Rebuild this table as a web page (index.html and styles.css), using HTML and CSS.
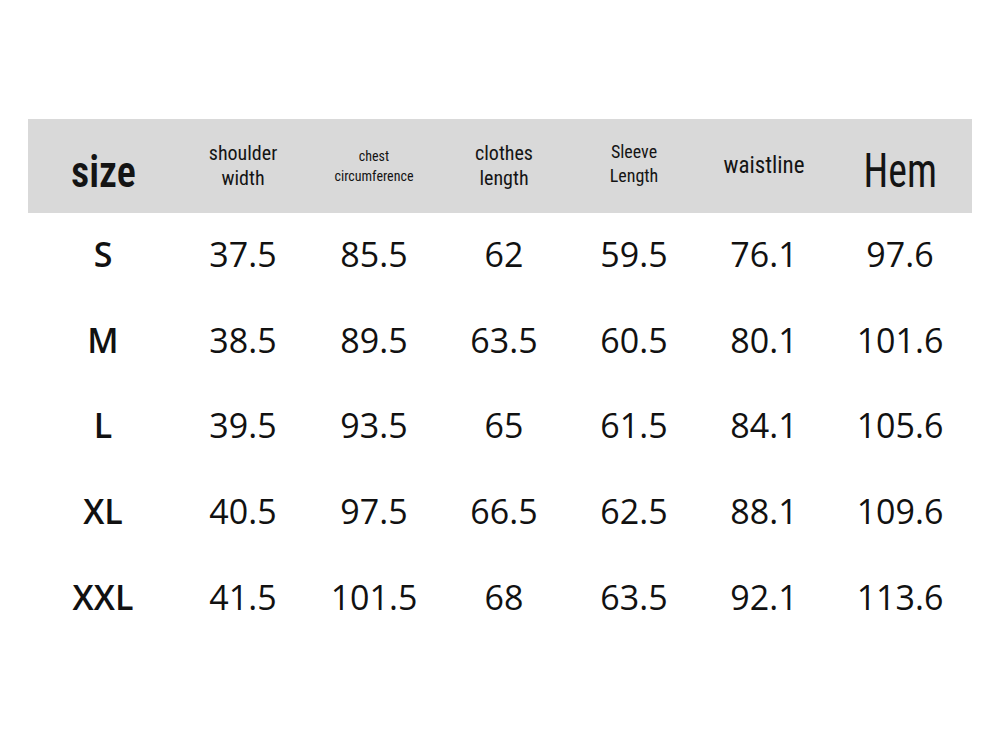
FILE: index.html
```html
<!DOCTYPE html>
<html>
<head>
<meta charset="utf-8">
<link rel="stylesheet" href="styles.css">
</head>
<body>
<div class="page">
  <div class="table">
    <div class="row head">
      <div class="cell h-size"><span class="narrow">size</span></div>
      <div class="cell h-two">shoulder<br>width</div>
      <div class="cell h-small">chest<br>circumference</div>
      <div class="cell h-two">clothes<br>length</div>
      <div class="cell h-sleeve">Sleeve<br>Length</div>
      <div class="cell h-waist">waistline</div>
      <div class="cell h-hem"><span class="narrow">Hem</span></div>
    </div>
    <div class="row">
      <div class="cell label">S</div><div class="cell">37.5</div><div class="cell">85.5</div><div class="cell">62</div><div class="cell">59.5</div><div class="cell">76.1</div><div class="cell">97.6</div>
    </div>
    <div class="row">
      <div class="cell label">M</div><div class="cell">38.5</div><div class="cell">89.5</div><div class="cell">63.5</div><div class="cell">60.5</div><div class="cell">80.1</div><div class="cell">101.6</div>
    </div>
    <div class="row">
      <div class="cell label">L</div><div class="cell">39.5</div><div class="cell">93.5</div><div class="cell">65</div><div class="cell">61.5</div><div class="cell">84.1</div><div class="cell">105.6</div>
    </div>
    <div class="row">
      <div class="cell label">XL</div><div class="cell">40.5</div><div class="cell">97.5</div><div class="cell">66.5</div><div class="cell">62.5</div><div class="cell">88.1</div><div class="cell">109.6</div>
    </div>
    <div class="row">
      <div class="cell label">XXL</div><div class="cell">41.5</div><div class="cell">101.5</div><div class="cell">68</div><div class="cell">63.5</div><div class="cell">92.1</div><div class="cell">113.6</div>
    </div>
  </div>
</div>
</body>
</html>
```

FILE: styles.css
```css
* { box-sizing: border-box; }
html, body {
  margin: 0;
  padding: 0;
  background: #ffffff;
}
.page {
  width: 1000px;
  height: 750px;
  padding: 119px 28px 0 28px;
  font-family: "Open Sans", "Noto Sans", sans-serif;
  color: #111111;
}
.table {
  width: 944px;
  display: flex;
  flex-direction: column;
}
.row {
  display: grid;
  grid-template-columns: 150px 130px 132px 128px 132px 128px 144px;
  height: 85.7px;
  align-items: center;
}
.cell {
  text-align: center;
  font-size: 34px;
  line-height: 1;
  padding-bottom: 4px;
}
.label {
  font-weight: 600;
}
.head {
  height: 94px;
  background: #d9d9d9;
}
.head .cell {
  font-family: "Roboto Condensed", "Liberation Sans Narrow", "DejaVu Sans Condensed", "Roboto", sans-serif;
  font-stretch: condensed;
  font-weight: 400;
  color: #141414;
  padding-bottom: 0;
}
.narrow {
  display: inline-block;
}
.head .h-size {
  font-size: 45px;
  font-weight: 600;
  padding-top: 10px;
}
.h-size .narrow {
  transform: scaleX(0.89);
}
.head .h-two {
  font-size: 20px;
  line-height: 25px;
}
.head .h-small {
  font-size: 14px;
  line-height: 20px;
}
.head .h-sleeve {
  font-size: 18px;
  line-height: 24px;
  padding-bottom: 4px;
}
.head .h-waist {
  font-size: 23px;
  padding-bottom: 2px;
}
.head .h-hem {
  font-size: 48px;
  padding-top: 10px;
}
.h-hem .narrow {
  transform: scaleX(0.83);
}
```
